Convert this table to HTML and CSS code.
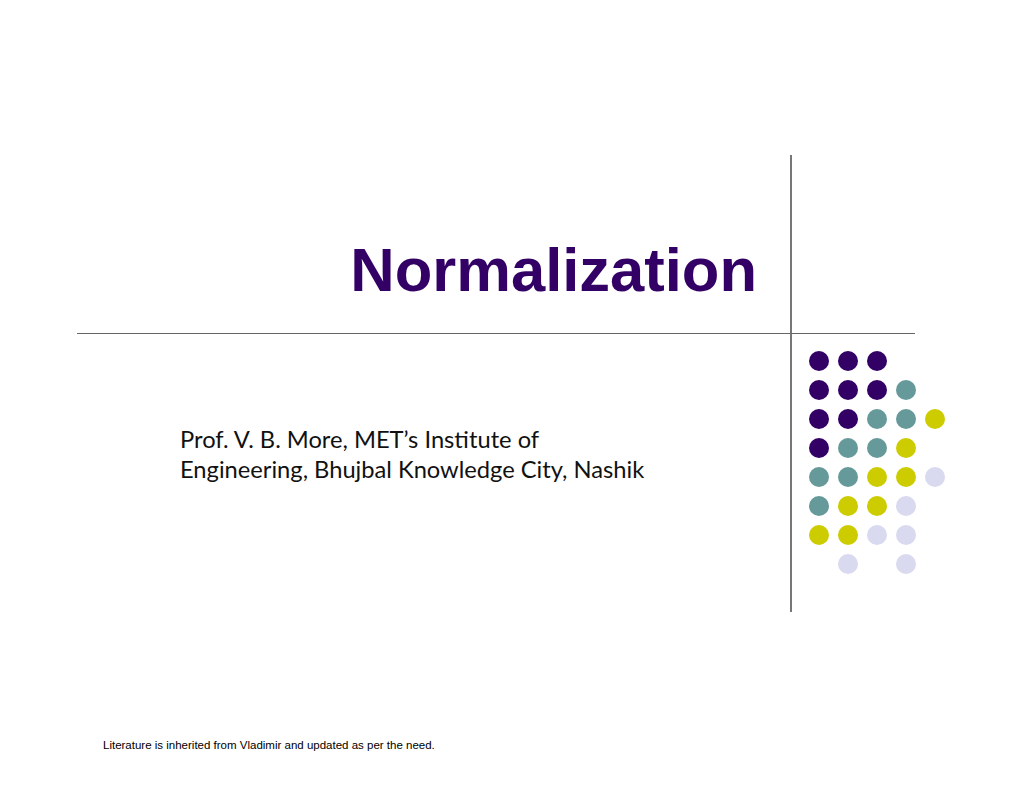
FILE: index.html
```html
<!DOCTYPE html>
<html>
<head>
<meta charset="utf-8">
<title>Normalization</title>
<link rel="stylesheet" href="styles.css">
</head>
<body>
<div class="slide">
  <div class="frame">
    <div class="title-cell">
      <h1 class="title">Normalization</h1>
    </div>
    <div class="corner-top"></div>
    <div class="subtitle-cell">
      <p class="subtitle">Prof. V. B. More, MET’s Institute of<br>Engineering, Bhujbal Knowledge City, Nashik</p>
    </div>
    <div class="dots-cell">
      <div class="dots">
        <span class="dot p"></span><span class="dot p"></span><span class="dot p"></span><span class="dot"></span><span class="dot"></span>
        <span class="dot p"></span><span class="dot p"></span><span class="dot p"></span><span class="dot t"></span><span class="dot"></span>
        <span class="dot p"></span><span class="dot p"></span><span class="dot t"></span><span class="dot t"></span><span class="dot y"></span>
        <span class="dot p"></span><span class="dot t"></span><span class="dot t"></span><span class="dot y"></span><span class="dot"></span>
        <span class="dot t"></span><span class="dot t"></span><span class="dot y"></span><span class="dot y"></span><span class="dot l"></span>
        <span class="dot t"></span><span class="dot y"></span><span class="dot y"></span><span class="dot l"></span><span class="dot"></span>
        <span class="dot y"></span><span class="dot y"></span><span class="dot l"></span><span class="dot l"></span><span class="dot"></span>
        <span class="dot"></span><span class="dot l"></span><span class="dot"></span><span class="dot l"></span><span class="dot"></span>
      </div>
    </div>
  </div>
  <p class="footer">Literature is inherited from Vladimir and updated as per the need.</p>
</div>
</body>
</html>
```
FILE: styles.css
```css
html, body {
  margin: 0;
  padding: 0;
  background: #ffffff;
}

.slide {
  width: 1024px;
  height: 791px;
  box-sizing: border-box;
  padding: 155px 0 0 77px;
  background: #ffffff;
  overflow: hidden;
}

.frame {
  display: grid;
  grid-template-columns: 713px 125px;
  grid-template-rows: 178px 279px;
}

.title-cell {
  display: flex;
  align-items: flex-end;
  justify-content: flex-end;
  padding: 0 33px 32px 0;
}

.title {
  margin: 0;
  font-family: "Liberation Sans", Arial, sans-serif;
  font-weight: bold;
  font-size: 61.5px;
  line-height: 62px;
  color: #330066;
}

.corner-top {
  border-left: 2px solid #777777;
}

.subtitle-cell {
  border-top: 1px solid #666666;
  padding: 90px 0 0 103px;
}

.subtitle {
  margin: 0;
  font-family: Lato, "Open Sans", sans-serif;
  font-size: 23.7px;
  line-height: 30px;
  color: #111111;
}

.dots-cell {
  border-top: 1px solid #666666;
  border-left: 2px solid #777777;
  padding: 17px 0 0 17px;
}

.dots {
  display: grid;
  grid-template-columns: repeat(5, 20px);
  grid-auto-rows: 20px;
  gap: 9px;
}

.dot {
  width: 20px;
  height: 20px;
  border-radius: 50%;
}

.dot.p { background: #330066; }
.dot.t { background: #669999; }
.dot.y { background: #cccc00; }
.dot.l { background: #d9d9f0; }

.footer {
  margin: 126px 0 0 26px;
  font-family: "Liberation Sans", Arial, sans-serif;
  font-size: 11.5px;
  line-height: 14px;
  color: #000000;
}
```
